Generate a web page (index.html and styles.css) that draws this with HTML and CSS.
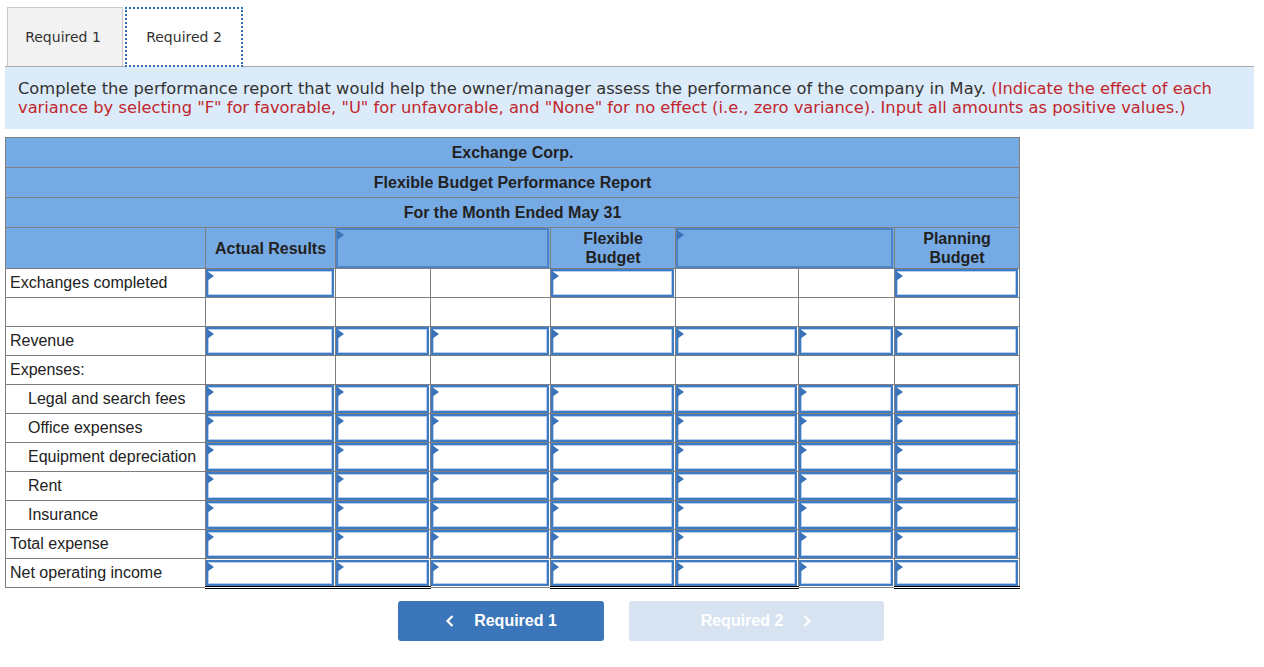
FILE: index.html
```html
<!DOCTYPE html>
<html>
<head>
<meta charset="utf-8">
<link rel="stylesheet" href="styles.css">
</head>
<body>
<div class="tabs">
  <div class="tab tab-off">Required 1</div>
  <div class="tab tab-on">Required 2</div>
</div>
<div class="instr">Complete the performance report that would help the owner/manager assess the performance of the company in May. <span class="red">(Indicate the effect of each variance by selecting "F" for favorable, "U" for unfavorable, and "None" for no effect (i.e., zero variance). Input all amounts as positive values.)</span></div>

<table class="rep">
  <colgroup>
    <col class="c0"><col class="c1"><col class="c2"><col class="c3"><col class="c4"><col class="c5"><col class="c6"><col class="c7">
  </colgroup>
  <tr class="hr"><th colspan="8">Exchange Corp.</th></tr>
  <tr class="hr"><th colspan="8">Flexible Budget Performance Report</th></tr>
  <tr class="hr"><th colspan="8">For the Month Ended May 31</th></tr>
  <tr class="hr4">
    <th></th>
    <th>Actual Results</th>
    <th colspan="2" class="selcell"><div class="sel"></div></th>
    <th>Flexible<br>Budget</th>
    <th colspan="2" class="selcell"><div class="sel"></div></th>
    <th>Planning<br>Budget</th>
  </tr>
  <tr>
    <td class="lbl">Exchanges completed</td>
    <td class="ic"><div class="inp"></div></td><td></td><td></td>
    <td class="ic"><div class="inp"></div></td><td></td><td></td>
    <td class="ic"><div class="inp"></div></td>
  </tr>
  <tr>
    <td class="lbl"></td><td></td><td></td><td></td><td></td><td></td><td></td><td></td>
  </tr>
  <tr>
    <td class="lbl">Revenue</td>
    <td class="ic"><div class="inp"></div></td><td class="ic"><div class="inp"></div></td><td class="ic"><div class="inp"></div></td>
    <td class="ic"><div class="inp"></div></td><td class="ic"><div class="inp"></div></td><td class="ic"><div class="inp"></div></td>
    <td class="ic"><div class="inp"></div></td>
  </tr>
  <tr>
    <td class="lbl">Expenses:</td><td></td><td></td><td></td><td></td><td></td><td></td><td></td>
  </tr>
  <tr>
    <td class="lbl ind">Legal and search fees</td>
    <td class="ic"><div class="inp"></div></td><td class="ic"><div class="inp"></div></td><td class="ic"><div class="inp"></div></td>
    <td class="ic"><div class="inp"></div></td><td class="ic"><div class="inp"></div></td><td class="ic"><div class="inp"></div></td>
    <td class="ic"><div class="inp"></div></td>
  </tr>
  <tr>
    <td class="lbl ind">Office expenses</td>
    <td class="ic"><div class="inp"></div></td><td class="ic"><div class="inp"></div></td><td class="ic"><div class="inp"></div></td>
    <td class="ic"><div class="inp"></div></td><td class="ic"><div class="inp"></div></td><td class="ic"><div class="inp"></div></td>
    <td class="ic"><div class="inp"></div></td>
  </tr>
  <tr>
    <td class="lbl ind">Equipment depreciation</td>
    <td class="ic"><div class="inp"></div></td><td class="ic"><div class="inp"></div></td><td class="ic"><div class="inp"></div></td>
    <td class="ic"><div class="inp"></div></td><td class="ic"><div class="inp"></div></td><td class="ic"><div class="inp"></div></td>
    <td class="ic"><div class="inp"></div></td>
  </tr>
  <tr>
    <td class="lbl ind">Rent</td>
    <td class="ic"><div class="inp"></div></td><td class="ic"><div class="inp"></div></td><td class="ic"><div class="inp"></div></td>
    <td class="ic"><div class="inp"></div></td><td class="ic"><div class="inp"></div></td><td class="ic"><div class="inp"></div></td>
    <td class="ic"><div class="inp"></div></td>
  </tr>
  <tr>
    <td class="lbl ind">Insurance</td>
    <td class="ic"><div class="inp"></div></td><td class="ic"><div class="inp"></div></td><td class="ic"><div class="inp"></div></td>
    <td class="ic"><div class="inp"></div></td><td class="ic"><div class="inp"></div></td><td class="ic"><div class="inp"></div></td>
    <td class="ic"><div class="inp"></div></td>
  </tr>
  <tr class="tot">
    <td class="lbl">Total expense</td>
    <td class="ic"><div class="inp"></div></td><td class="ic"><div class="inp"></div></td><td class="ic"><div class="inp"></div></td>
    <td class="ic"><div class="inp"></div></td><td class="ic"><div class="inp"></div></td><td class="ic"><div class="inp"></div></td>
    <td class="ic"><div class="inp"></div></td>
  </tr>
  <tr class="net">
    <td class="lbl">Net operating income</td>
    <td class="ic dbl"><div class="inp"></div></td><td class="ic dbl"><div class="inp"></div></td><td class="ic"><div class="inp"></div></td>
    <td class="ic dbl"><div class="inp"></div></td><td class="ic dbl"><div class="inp"></div></td><td class="ic"><div class="inp"></div></td>
    <td class="ic dbl"><div class="inp"></div></td>
  </tr>
</table>

<div class="navrow">
  <div class="btn btn-prev">
    <svg class="chev" width="10" height="14" viewBox="0 0 10 14"><path d="M7.5 2 L2.5 7 L7.5 12" fill="none" stroke="#fff" stroke-width="2.2"/></svg>
    <span>Required 1</span>
  </div>
  <div class="btn btn-next">
    <span>Required 2</span>
    <svg class="chev" width="10" height="14" viewBox="0 0 10 14"><path d="M2.5 2 L7.5 7 L2.5 12" fill="none" stroke="#fff" stroke-width="2.2"/></svg>
  </div>
</div>
</body>
</html>
```

FILE: styles.css
```css
html, body {
  margin: 0;
  padding: 0;
  background: #fff;
}
body {
  padding: 7px 10px 0 5px;
  font-family: "Liberation Sans", Arial, sans-serif;
  color: #222;
}

.tabs {
  display: flex;
  gap: 2px;
  padding-left: 2px;
  border-bottom: 1px solid #a9a9a9;
  height: 59px;
}
.tab {
  box-sizing: border-box;
  height: 60px;
  display: flex;
  align-items: center;
  justify-content: center;
  font-family: "DejaVu Sans", Verdana, sans-serif;
  font-size: 14px;
  color: #333;
}
.tab-off {
  width: 116px;
  background: #f2f2f2;
  border: 1px solid #c9c9c9;
  border-bottom: none;
  height: 59px;
  padding-right: 4px;
}
.tab-on {
  width: 118px;
  background: #fff;
  border: 2px dotted #2f6db8;
}

.instr {
  background: #dbebf9;
  padding: 12px 13px 11px 13px;
  font-family: "DejaVu Sans", Verdana, sans-serif;
  font-size: 16.3px;
  line-height: 19px;
  color: #333;
  height: 39px;
  margin-bottom: 8px;
}
.red {
  color: #c1272d;
}

.rep {
  border-collapse: collapse;
  table-layout: fixed;
  width: 1014px;
  font-size: 16px;
}
.c0 { width: 200px; }
.c1 { width: 130px; }
.c2 { width: 95px; }
.c3 { width: 120px; }
.c4 { width: 125px; }
.c5 { width: 123px; }
.c6 { width: 96px; }
.c7 { width: 125px; }

.rep th, .rep td {
  border: 1px solid #7f7f7f;
  padding: 0;
}
.rep th {
  background: #76aae4;
  font-weight: bold;
  color: #222;
  text-align: center;
  line-height: 19px;
}
.hr th {
  height: 29px;
}
.hr4 th {
  height: 40px;
}
.selcell {
  padding: 0 !important;
}
.sel {
  position: relative;
  box-sizing: border-box;
  height: 40px;
  margin-right: 1px;
  border: 2px solid #4a84c9;
  background: #76aae4;
}
.sel::before {
  content: "";
  position: absolute;
  left: -1px;
  top: 0;
  border-left: 7px solid #3a73ba;
  border-top: 5px solid transparent;
  border-bottom: 5px solid transparent;
}

.rep td {
  height: 28px;
  background: #fff;
}
.lbl {
  padding-left: 4px !important;
  white-space: nowrap;
  color: #222;
}
.ind {
  padding-left: 22px !important;
}
.ic {
  padding: 0 1px 0 0 !important;
}
.inp {
  position: relative;
  box-sizing: border-box;
  height: 28px;
  border: 2px solid #3f7bc2;
  box-shadow: inset 0 0 0 1px #b5cdee;
  background: #fff;
}
.inp::before {
  content: "";
  position: absolute;
  left: -1px;
  top: 0;
  border-left: 7px solid #3a73ba;
  border-top: 5px solid transparent;
  border-bottom: 5px solid transparent;
}
.tot .ic {
  border-top: 1px solid #000;
}
.net td {
  height: 27px;
}
.net .inp {
  height: 26px;
}
.dbl {
  border-bottom: 3px double #000 !important;
}

.navrow {
  display: flex;
  gap: 25px;
  padding-left: 393px;
  margin-top: 12px;
}
.btn {
  height: 40px;
  border-radius: 3px;
  display: flex;
  align-items: center;
  justify-content: center;
  gap: 19px;
  color: #fff;
  font-weight: bold;
  font-size: 16px;
}
.btn-prev {
  width: 206px;
  background: #3a76b9;
}
.btn-next {
  width: 255px;
  background: #d7e3f1;
}
.chev {
  display: block;
}
```
